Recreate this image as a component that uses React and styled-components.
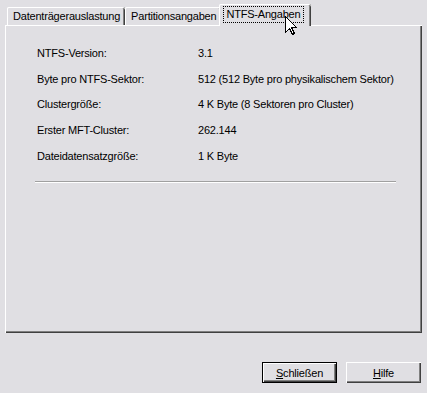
import React from "react";
import styled, { createGlobalStyle } from "styled-components";

const Global = createGlobalStyle`
  html, body { margin: 0; padding: 0; background: #e0dfe3; }
  * { box-sizing: border-box; }
`;

const Dialog = styled.div`
  position: relative;
  width: 427px;
  height: 393px;
  background: #e0dfe3;
  padding: 4px 5px 0 5px;
  font-family: "Liberation Sans", Arial, sans-serif;
  font-size: 11px;
  letter-spacing: -0.2px;
  color: #000;
  display: flex;
  flex-direction: column;
`;

const TabStrip = styled.div`
  display: flex;
  align-items: flex-start;
  height: 21px;
  padding-left: 2px;
`;

const Tab = styled.div`
  position: relative;
  z-index: ${(p) => (p.$active ? 2 : 0)};
  height: ${(p) => (p.$active ? "22px" : "18px")};
  margin-top: ${(p) => (p.$active ? "0" : "3px")};
  margin-left: ${(p) => (p.$active ? "-2px" : "0")};
  margin-right: ${(p) => (p.$active ? "-2px" : "0")};
  padding: ${(p) => (p.$active ? "0 7px 1px 4px" : "0 5px 0 6px")};
  display: flex;
  align-items: center;
  background: #e0dfe3;
  border-radius: 2px 2px 0 0;
  box-shadow: inset 1px 0 #fff, inset 0 1px #fff, inset -1px 0 #404040,
    inset -2px 0 #808080;
  white-space: nowrap;
`;

const Focus = styled.span`
  border: 1px dotted #000;
  padding: 1px 3px 1px 2px;
  line-height: 13px;
`;

const Panel = styled.div`
  width: 417px;
  height: 308px;
  background: #e0dfe3;
  box-shadow: inset 1px 1px #fff, inset -1px -1px #404040, inset -2px -2px #808080;
  padding: 15px 26px 0 32px;
`;

const InfoGrid = styled.div`
  display: grid;
  grid-template-columns: 161px 1fr;
  grid-auto-rows: 25.75px;
  align-items: center;
`;

const Cell = styled.div`
  white-space: nowrap;
`;

const Separator = styled.div`
  margin: 12px 0 0 -2px;
  height: 2px;
  border-top: 1px solid #a0a0a0;
  border-bottom: 1px solid #fff;
`;

const Footer = styled.div`
  display: flex;
  justify-content: flex-end;
  gap: 9px;
  padding: 29px 1px 0 0;
`;

const Button = styled.button`
  width: 75px;
  height: 21px;
  font-family: inherit;
  font-size: 11px;
  letter-spacing: inherit;
  color: #000;
  background: #e0dfe3;
  padding: 0;
  border: ${(p) => (p.$default ? "1px solid #000" : "none")};
  box-shadow: inset 1px 1px #fff, inset -1px -1px #404040, inset -2px -2px #808080;
`;

const Cursor = styled.svg`
  position: absolute;
  left: 285px;
  top: 16px;
  width: 13px;
  height: 20px;
  z-index: 5;
`;

const rows = [
  ["NTFS-Version:", "3.1"],
  ["Byte pro NTFS-Sektor:", "512 (512 Byte pro physikalischem Sektor)"],
  ["Clustergröße:", "4 K Byte (8 Sektoren pro Cluster)"],
  ["Erster MFT-Cluster:", "262.144"],
  ["Dateidatensatzgröße:", "1 K Byte"],
];

export default function App() {
  return (
    <>
      <Global />
      <Dialog>
        <TabStrip>
          <Tab>Datenträgerauslastung</Tab>
          <Tab>Partitionsangaben</Tab>
          <Tab $active>
            <Focus>NTFS-Angaben</Focus>
          </Tab>
        </TabStrip>
        <Panel>
          <InfoGrid>
            {rows.map(([k, v]) => (
              <React.Fragment key={k}>
                <Cell>{k}</Cell>
                <Cell>{v}</Cell>
              </React.Fragment>
            ))}
          </InfoGrid>
          <Separator />
        </Panel>
        <Footer>
          <Button $default>
            <u>S</u>chließen
          </Button>
          <Button>
            <u>H</u>ilfe
          </Button>
        </Footer>
        <Cursor viewBox="0 0 13 20">
          <path
            d="M0.5 0.5 V16.5 L4.5 12.5 L7.5 18.5 L9.5 17.5 L6.5 11.5 H11.5 Z"
            fill="#fff"
            stroke="#000"
            strokeWidth="1"
            shapeRendering="crispEdges"
          />
        </Cursor>
      </Dialog>
    </>
  );
}
